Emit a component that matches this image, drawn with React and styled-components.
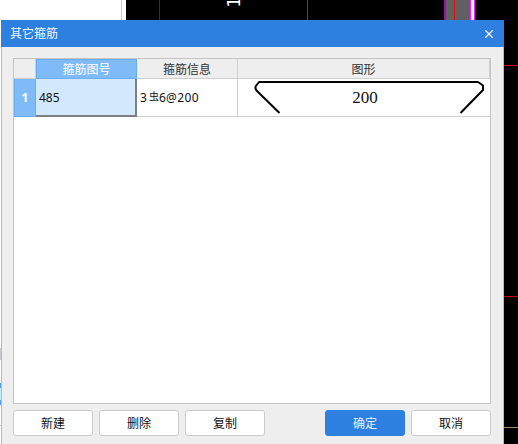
import React from 'react';
import styled, { createGlobalStyle } from 'styled-components';
import { X } from 'lucide-react';

const GlobalStyle = createGlobalStyle`
  html, body {
    margin: 0;
    padding: 0;
    background: #fff;
  }
  * {
    box-sizing: border-box;
  }
`;

const Screen = styled.div`
  position: relative;
  width: 518px;
  height: 444px;
  overflow: hidden;
  font-family: 'Noto Sans', 'Noto Sans CJK SC', sans-serif;
  font-size: 12px;
  color: #111;
`;

const Backdrop = styled.svg`
  position: absolute;
  inset: 0;
  display: block;
`;

const Dialog = styled.div`
  position: absolute;
  left: 1px;
  top: 20px;
  width: 503px;
  height: 424px;
  display: flex;
  flex-direction: column;
  background: #eeeeee;
  border-left: 1px solid #b4bac2;
  border-right: 1px solid #b4bac2;
`;

const TitleBar = styled.div`
  flex: none;
  height: 27px;
  margin: 0 -1px;
  padding: 0 8px 0 9px;
  display: flex;
  align-items: center;
  justify-content: space-between;
  background: #2d7fe0;
  color: #f2f7fd;
  line-height: 27px;
`;

const CloseIcon = styled(X)`
  width: 14px;
  height: 14px;
  color: #fff;
`;

const Body = styled.div`
  flex: 1;
  min-height: 0;
  display: flex;
  flex-direction: column;
  padding: 11px 12px 8px 11px;
`;

const Grid = styled.div`
  flex: 1;
  min-height: 0;
  background: #fff;
  border: 1px solid #c4c4c4;
  display: grid;
  grid-template-columns: 22px 101px 101px 1fr;
  grid-template-rows: 20px 38px;
  align-content: start;
`;

const HeaderCell = styled.div`
  display: flex;
  align-items: center;
  justify-content: center;
  background: ${(p) => (p.$active ? '#7fbbf8' : '#eeeeee')};
  color: ${(p) => (p.$active ? '#fff' : '#333')};
  border-right: 1px solid ${(p) => (p.$active ? '#6aaef2' : '#cfcfcf')};
  border-bottom: 1px solid ${(p) => (p.$active ? '#6aaef2' : '#cfcfcf')};
  ${(p) => p.$active && 'border-top: 1px solid #6aaef2; border-left: 1px solid #6aaef2;'}
`;

const RowHead = styled.div`
  display: flex;
  align-items: center;
  justify-content: center;
  background: #7fbbf8;
  color: #fff;
  font-weight: 700;
  border: 1px solid #6aaef2;
  border-top: none;
`;

const Cell = styled.div`
  display: flex;
  align-items: center;
  padding-left: 3px;
  background: ${(p) => (p.$selected ? '#d2e8fd' : '#fff')};
  border-right: ${(p) => (p.$selected ? '2px solid #7f7f7f' : '1px solid #d0d0d0')};
  border-bottom: ${(p) => (p.$selected ? '2px solid #7f7f7f' : '1px solid #d0d0d0')};
`;

const RebarMark = styled.span`
  font-size: 10px;
  line-height: 1;
  margin: -3px 0 0 2px;
`;

const RebarRest = styled.span`
  letter-spacing: 0.35px;
`;

const ShapeCell = styled.div`
  border-bottom: 1px solid #d0d0d0;
`;

const Shape = styled.svg`
  display: block;
`;

const ShapeLabel = styled.text`
  font-family: 'Liberation Serif', serif;
  font-size: 17px;
  fill: #111;
`;

const Actions = styled.div`
  flex: none;
  display: flex;
  gap: 6px;
  margin-top: 6px;
`;

const Button = styled.button`
  width: 80px;
  height: 26px;
  padding: 0;
  font: inherit;
  border-radius: 3px;
  border: 1px solid ${(p) => (p.$primary ? '#2d7fe0' : '#cccccc')};
  background: ${(p) => (p.$primary ? '#2d7fe0' : '#fff')};
  color: ${(p) => (p.$primary ? '#e8f2fd' : '#111')};
  margin-left: ${(p) => (p.$push ? 'auto' : '0')};
`;

// canvas behind the dialog
const Cad = () => (
  <Backdrop width="518" height="444" viewBox="0 0 518 444" shapeRendering="crispEdges">
    <rect x="0" y="0" width="518" height="444" fill="#fff" />
    <rect x="121" y="0" width="1" height="20" fill="#c8c8c8" />
    <rect x="126" y="0" width="392" height="444" fill="#000" />
    <rect x="159" y="0" width="1" height="20" fill="#0a4a0a" />
    <rect x="307" y="0" width="1" height="20" fill="#0a7a0a" />
    <rect x="444" y="0" width="2" height="20" fill="#a010a0" />
    <rect x="446" y="0" width="24" height="20" fill="#606060" />
    <rect x="454" y="0" width="1" height="20" fill="#e01010" />
    <rect x="470" y="0" width="1" height="20" fill="#ff20ff" />
    <rect x="471" y="0" width="3" height="20" fill="#fff" />
    <rect x="474" y="0" width="1" height="20" fill="#ff20ff" />
    <rect x="504" y="65" width="14" height="1" fill="#d01010" />
    <rect x="504" y="296" width="14" height="1" fill="#c80000" />
    <rect x="504" y="427" width="14" height="1" fill="#a09060" />
    <rect x="0" y="348" width="1" height="12" fill="#c8ccd0" />
    <rect x="0" y="383" width="1" height="5" fill="#5aa0f0" />
    <rect x="0" y="388" width="1" height="12" fill="#bff0f8" />
    <rect x="0" y="400" width="1" height="5" fill="#5aa0f0" />
    <rect x="0" y="425" width="1" height="1" fill="#c8ccd0" />
    <text
      transform="translate(240 2) rotate(-90)"
      fontFamily="DejaVu Sans, sans-serif"
      fontSize="17"
      fill="#fff"
      textAnchor="middle"
    >
      1
    </text>
  </Backdrop>
);

export default function App() {
  return (
    <>
      <GlobalStyle />
      <Screen>
        <Cad />
        <Dialog>
          <TitleBar>
            <span>其它箍筋</span>
            <CloseIcon strokeWidth={2} />
          </TitleBar>
          <Body>
            <Grid>
              <HeaderCell />
              <HeaderCell $active>箍筋图号</HeaderCell>
              <HeaderCell>箍筋信息</HeaderCell>
              <HeaderCell>图形</HeaderCell>
              <RowHead>1</RowHead>
              <Cell $selected>485</Cell>
              <Cell>
                3<RebarMark>虫</RebarMark><RebarRest>6@200</RebarRest>
              </Cell>
              <ShapeCell>
                <Shape width="252" height="37" viewBox="238 79 252 37">
                  <path
                    d="M279.5 113 L256.5 90.5 L255.5 88.5 L255.5 86.5 L259 82 L478 82 L483 85.5 L483 90 L460.5 113"
                    fill="none"
                    stroke="#000"
                    strokeWidth="2"
                    strokeLinejoin="round"
                  />
                  <ShapeLabel x="365" y="103" textAnchor="middle">200</ShapeLabel>
                </Shape>
              </ShapeCell>
            </Grid>
            <Actions>
              <Button>新建</Button>
              <Button>删除</Button>
              <Button>复制</Button>
              <Button $primary $push>确定</Button>
              <Button>取消</Button>
            </Actions>
          </Body>
        </Dialog>
      </Screen>
    </>
  );
}
